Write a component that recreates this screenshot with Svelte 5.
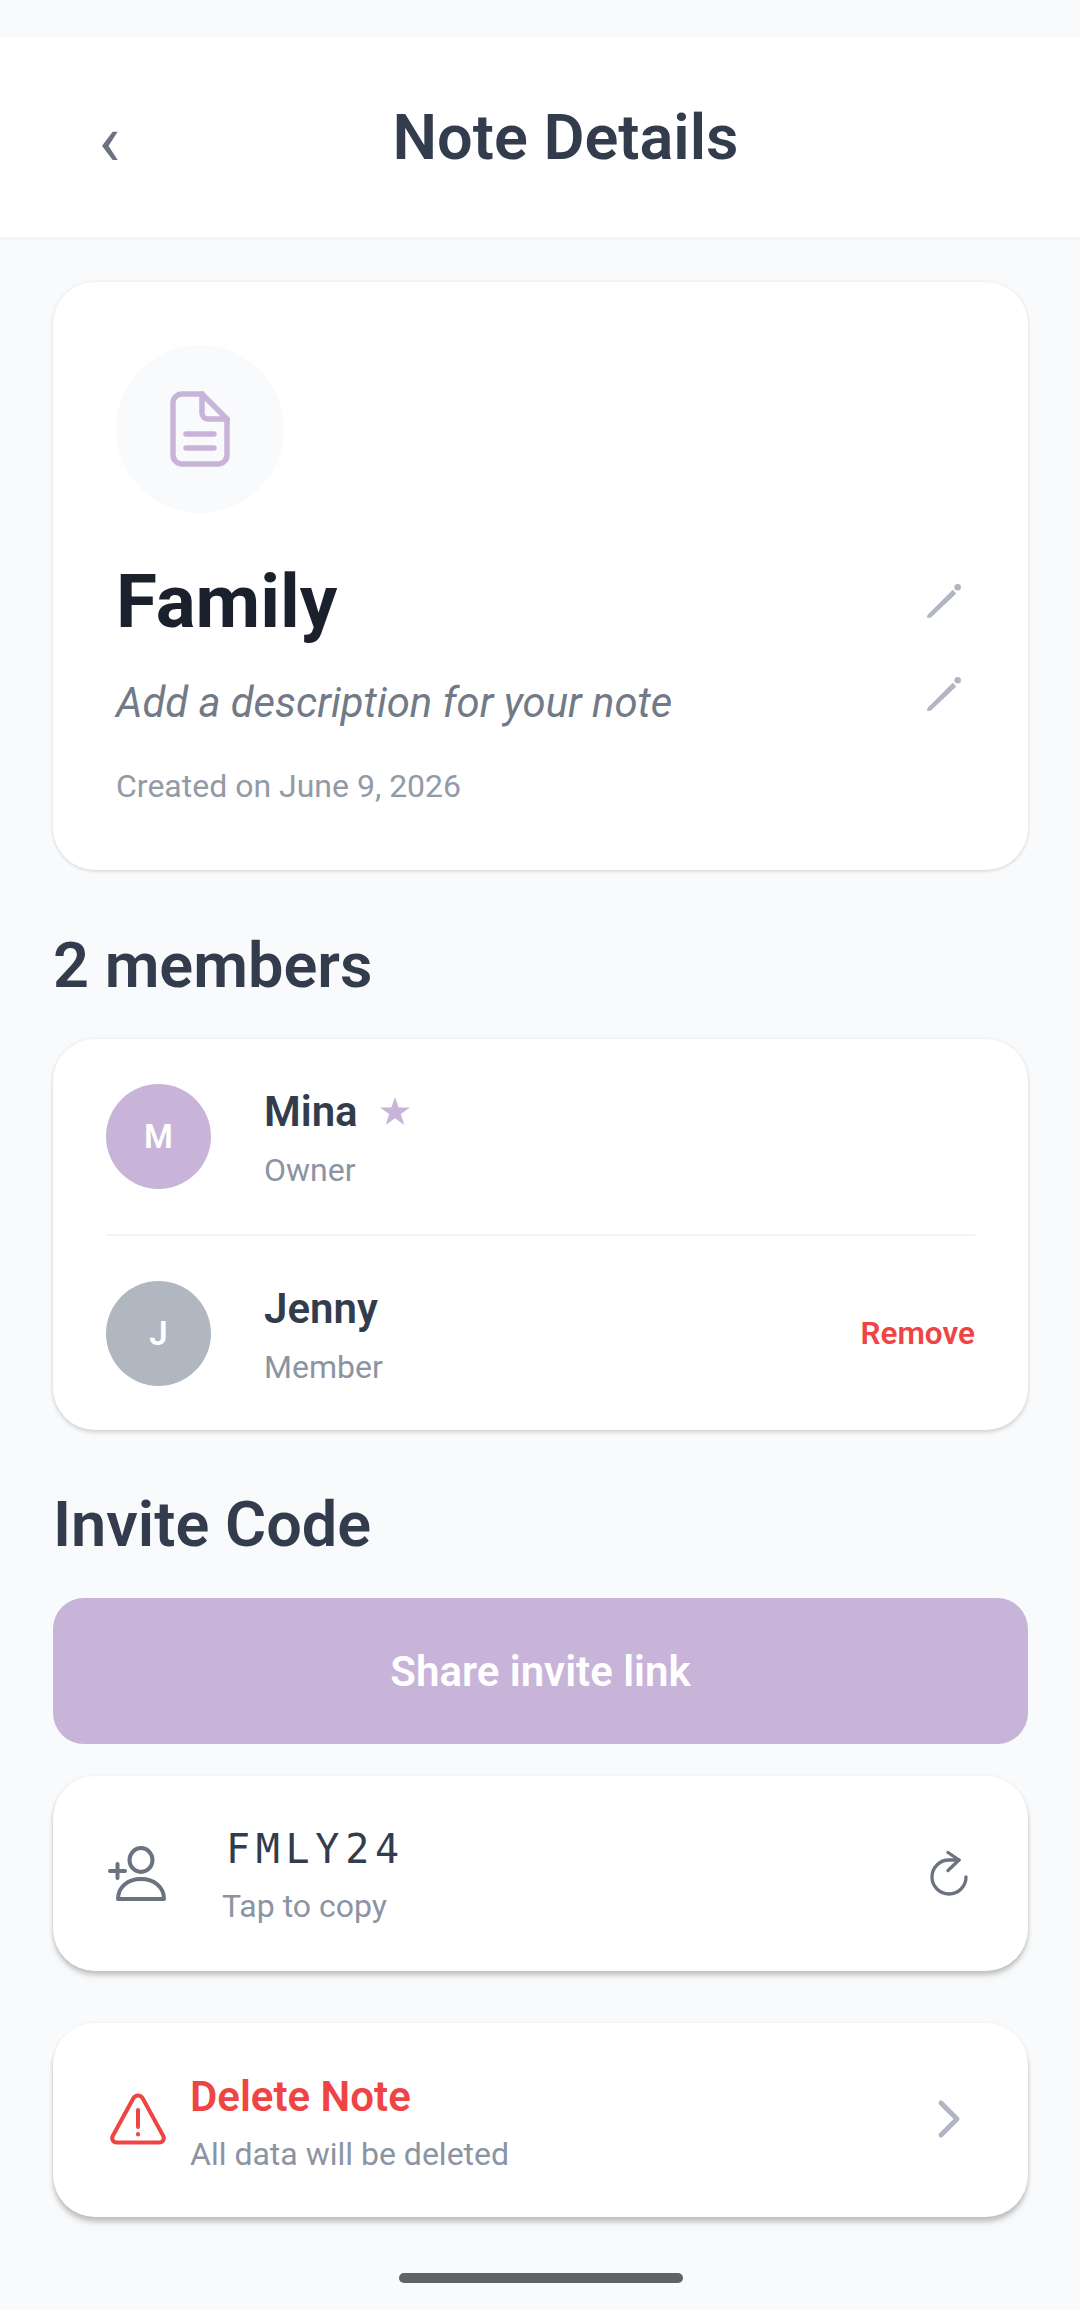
<script>
  const members = [
    { initial: "M", name: "Mina", role: "Owner", tone: "lavender", owner: true },
    { initial: "J", name: "Jenny", role: "Member", tone: "grey", owner: false },
  ];
</script>

{#snippet pencil()}
  <svg class="pencil" viewBox="0 0 42 42" aria-hidden="true">
    <path d="M4.500 37.500 L5 35 L29.700 10.200 L32.800 13.500 L8 37 Z" fill="#b0b7c1" stroke="#b0b7c1" stroke-width="1" stroke-linejoin="round" />
    <circle cx="34.700" cy="7.300" r="3.300" fill="#b0b7c1" />
  </svg>
{/snippet}

<div class="page">
  <header class="topbar">
    <button class="back" aria-label="Back">‹</button>
    <h1>Note Details</h1>
  </header>

  <main class="content">
    <section class="card note">
      <div class="note-icon">
        <svg viewBox="0 0 60 76" width="60" height="76" fill="none" stroke="#c8b3d9" stroke-width="5.500" stroke-linecap="round" stroke-linejoin="round" aria-hidden="true">
          <path d="M32 3H12a9 9 0 0 0-9 9v52a9 9 0 0 0 9 9h36a9 9 0 0 0 9-9V28Z" />
          <path d="M32 3v19a6 6 0 0 0 6 6h19" />
          <path d="M16 43h28M16 57h28" />
        </svg>
      </div>
      <div class="title-row">
        <h2>Family</h2>
        {@render pencil()}
      </div>
      <div class="desc-row">
        <p class="desc">Add a description for your note</p>
        {@render pencil()}
      </div>
      <p class="created">Created on June 9, 2026</p>
    </section>

    <h3 class="section-title members-title">2 members</h3>
    <section class="card members">
      {#each members as m, i}
        {#if i > 0}<div class="divider"></div>{/if}
        <div class="member">
          <div class="avatar {m.tone}">{m.initial}</div>
          <div class="member-info">
            <div class="name-line">
              <span class="name">{m.name}</span>
              {#if m.owner}
                <svg class="star" viewBox="0 0 30 28" aria-hidden="true">
                  <path d="M15 0l3.600 10.400H30l-9.200 6.700L24.300 28 15 21.300 5.700 28l3.500-10.900L0 10.400h11.400Z" fill="#c8b3d9" />
                </svg>
              {/if}
            </div>
            <div class="sub">{m.role}</div>
          </div>
          {#if !m.owner}<button class="remove">Remove</button>{/if}
        </div>
      {/each}
    </section>

    <h3 class="section-title invite-title">Invite Code</h3>
    <button class="share">Share invite link</button>

    <section class="card invite">
      <svg class="add-user" viewBox="0 0 60 56" fill="none" stroke="#6b7280" stroke-width="4" stroke-linecap="round" stroke-linejoin="round" aria-hidden="true">
        <ellipse cx="33" cy="14" rx="11.500" ry="12" />
        <path d="M10 53c0-12 10-20 23-20s23 8 23 20Z" />
        <path d="M2 25h15M9.500 18v14" />
      </svg>
      <div class="code-text">
        <div class="code">FMLY24</div>
        <div class="sub">Tap to copy</div>
      </div>
      <svg class="refresh" viewBox="0 0 52 52" fill="none" stroke="#6b7280" stroke-width="3.300" stroke-linecap="round" stroke-linejoin="round" aria-hidden="true">
        <path d="M43 29a17 17 0 1 1-17-17h10" />
        <path d="M25 4.500l11 7.500-11 10.500" />
      </svg>
    </section>

    <section class="card danger">
      <svg class="warn" viewBox="0 0 56 52" fill="none" stroke="#ef4444" stroke-width="4" stroke-linecap="round" stroke-linejoin="round" aria-hidden="true">
        <path d="M23.500 5 3 42.500c-2 3.500 0 7 4 7h42c4 0 6-3.500 4-7L32.500 5c-2-3.500-7-3.500-9 0Z" />
        <path d="M28 17v17" />
        <path d="M28 41v.5" />
      </svg>
      <div class="danger-text">
        <div class="danger-title">Delete Note</div>
        <div class="sub">All data will be deleted</div>
      </div>
      <svg class="chevron" viewBox="0 0 24 40" fill="none" stroke="#b0b7c1" stroke-width="5" stroke-linecap="round" stroke-linejoin="round" aria-hidden="true">
        <path d="M4 4l16 16L4 36" />
      </svg>
    </section>

    <div class="home-indicator"></div>
  </main>
</div>

<style>
  :global(body) {
    margin: 0;
    background: #f9fafb;
    font-family: Roboto, "Liberation Sans", sans-serif;
  }

  h1, h2, h3, p {
    margin: 0;
  }

  button {
    font-family: inherit;
    border: none;
    background: none;
    padding: 0;
  }

  .page {
    min-height: 2310px;
    padding-top: 37px;
    box-sizing: border-box;
  }

  .topbar {
    height: 203px;
    box-sizing: border-box;
    display: flex;
    align-items: center;
    padding: 0 69px 0 53px;
    background: #fff;
    border-bottom: 3px solid #f3f4f6;
  }

  .back {
    width: 67px;
    text-align: right;
    font-size: 72px;
    line-height: 63px;
    color: #6b7280;
    margin-top: 6px;
  }

  h1 {
    flex: 1;
    text-align: center;
    font-size: 63px;
    font-weight: 600;
    color: #323c4c;
  }

  .content {
    padding: 42px 52px 0 53px;
  }

  /* cards: shadow gets longer further down, like android elevation */
  .card {
    background: #fff;
    border-radius: 42px;
  }

  .note {
    height: 588px;
    box-sizing: border-box;
    padding: 63px;
    box-shadow: 0 0 4px rgba(0, 0, 0, 0.08), 0 2px 3px rgba(0, 0, 0, 0.08);
  }

  .note-icon {
    width: 168px;
    height: 168px;
    border-radius: 50%;
    background: #f9fafb;
    display: flex;
    align-items: center;
    justify-content: center;
  }

  .title-row,
  .desc-row {
    display: flex;
    justify-content: space-between;
  }

  .title-row {
    align-items: center;
    margin-top: 42px;
    height: 92px;
  }

  h2 {
    font-size: 74.600px;
    font-weight: 700;
    color: #1a202c;
  }

  .desc-row {
    align-items: flex-start;
    margin-top: 12px;
    height: 72px;
  }

  .desc {
    margin-top: 16px;
    font-size: 41.800px;
    line-height: 56px;
    font-style: italic;
    color: #727a88;
  }

  .pencil {
    width: 42px;
    height: 42px;
    flex-shrink: 0;
  }

  .desc-row .pencil {
    margin-top: 14px;
  }

  .created {
    margin-top: 36px;
    font-size: 32px;
    color: #929aa6;
  }

  .section-title {
    font-size: 63px;
    font-weight: 600;
    color: #323c4c;
    line-height: 68px;
  }

  .members-title {
    margin: 62px 0 39px;
  }

  .members {
    padding: 45px 53px 44px;
    box-shadow: 0 0 4px rgba(0, 0, 0, 0.07), 0 3px 4px rgba(0, 0, 0, 0.12);
  }

  .member {
    display: flex;
    align-items: center;
  }

  .avatar {
    width: 105px;
    height: 105px;
    border-radius: 50%;
    display: flex;
    align-items: center;
    justify-content: center;
    color: #fff;
    font-size: 33px;
    font-weight: 600;
    flex-shrink: 0;
  }

  .lavender {
    background: #c8b3d9;
  }

  .grey {
    background: #b0b7c1;
  }

  .member-info {
    flex: 1;
    margin-top: 2px;
    margin-left: 53px;
  }

  .name-line {
    display: flex;
    align-items: center;
    height: 50px;
  }

  .name {
    font-size: 42px;
    font-weight: 600;
    color: #323c4c;
  }

  .star {
    width: 30px;
    height: 28px;
    margin-left: 22px;
  }

  .sub {
    margin-top: 15px;
    font-size: 32px;
    color: #8a94a3;
  }

  .remove {
    font-size: 31.500px;
    font-weight: 600;
    color: #ef4444;
  }

  .divider {
    height: 2px;
    background: #f3f4f6;
    margin: 45px 0;
  }

  .invite-title {
    margin: 61px 0 39px;
  }

  .share {
    display: block;
    width: 100%;
    height: 146px;
    border-radius: 31px;
    background: #c8b3d9;
    color: #fff;
    font-size: 42px;
    font-weight: 600;
  }

  .invite {
    margin-top: 32px;
    height: 195px;
    display: flex;
    align-items: center;
    padding: 0 53px;
    box-shadow: 0 0 4px rgba(0, 0, 0, 0.06), 0 4px 4px rgba(0, 0, 0, 0.18), 0 7px 8px rgba(0, 0, 0, 0.04);
  }

  .add-user {
    width: 60px;
    height: 56px;
    flex-shrink: 0;
    margin-left: 2px;
  }

  .code-text {
    flex: 1;
    margin-top: 4px;
    margin-left: 54px;
  }

  .code {
    font-family: "DejaVu Sans Mono", monospace;
    font-size: 40px;
    letter-spacing: 5.700px;
    color: #323c4c;
    padding-left: 4px;
  }

  .code-text .sub {
    margin-top: 15px;
  }

  .refresh {
    width: 52px;
    height: 52px;
  }

  .danger {
    margin-top: 52px;
    height: 194px;
    display: flex;
    align-items: center;
    padding: 0 53px;
    box-shadow: 0 0 4px rgba(0, 0, 0, 0.06), 0 5px 4px rgba(0, 0, 0, 0.18), 0 8px 8px rgba(0, 0, 0, 0.04);
  }

  .warn {
    width: 56px;
    height: 52px;
    flex-shrink: 0;
    margin: 0 0 2px 4px;
  }

  .danger-text {
    flex: 1;
    margin-top: 4px;
    margin-left: 24px;
  }

  .danger-text .sub {
    margin-top: 14px;
  }

  .danger-title {
    font-size: 42px;
    font-weight: 600;
    color: #ef4444;
  }

  .chevron {
    width: 24px;
    height: 40px;
    margin: 0 14px 2px 0;
  }

  .home-indicator {
    width: 284px;
    height: 10px;
    border-radius: 5px;
    background: #5f6366;
    margin: 56px auto 0;
  }
</style>
